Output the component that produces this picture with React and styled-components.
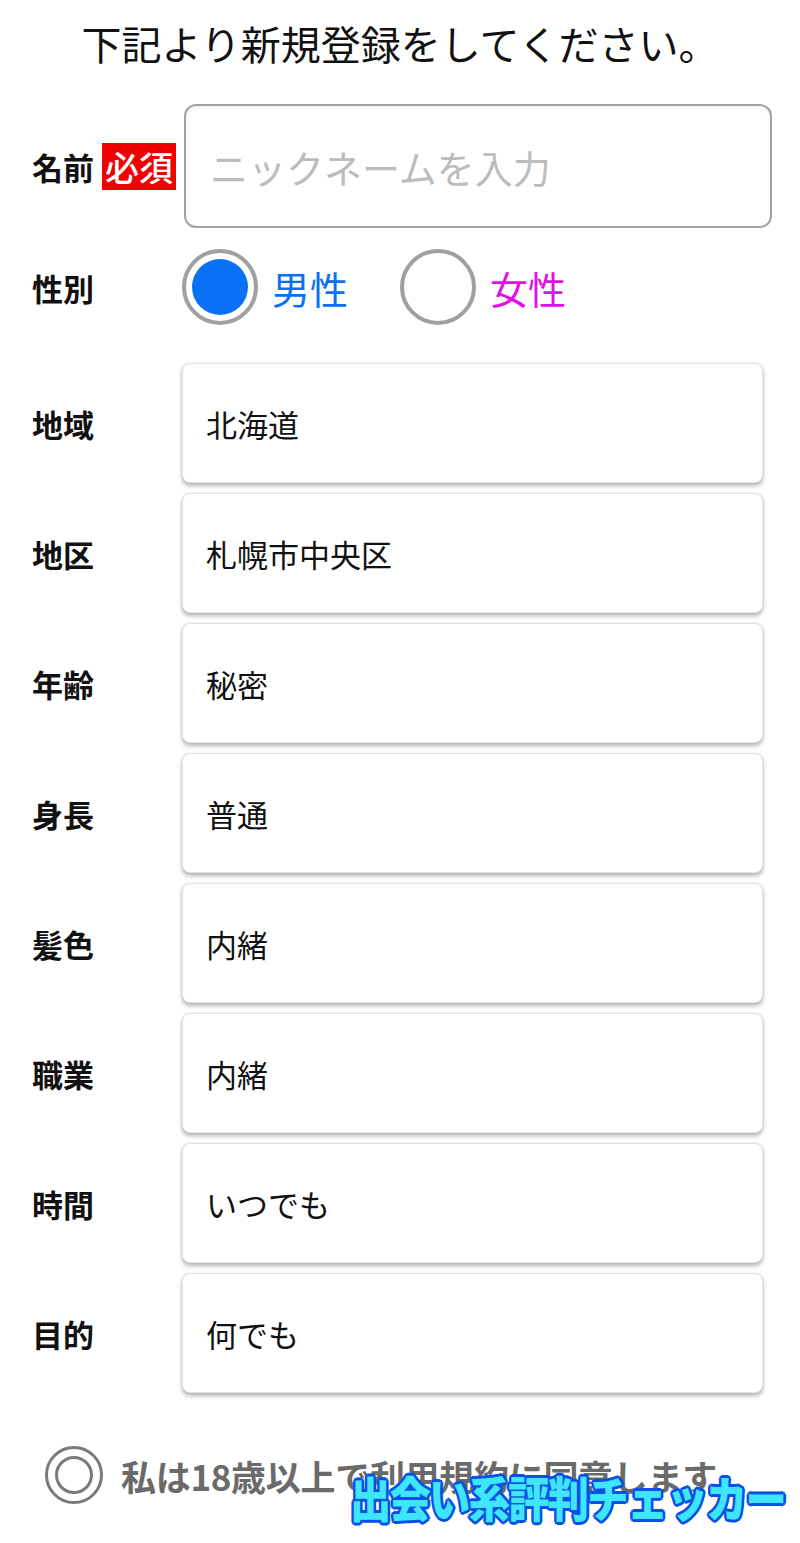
import React from 'react';
import styled, { createGlobalStyle } from 'styled-components';

const GlobalStyle = createGlobalStyle`
  html, body {
    margin: 0;
    padding: 0;
    background: #ffffff;
  }
  body {
    font-family: "Noto Sans CJK JP", "Noto Sans", sans-serif;
    color: #111;
  }
`;

const Page = styled.div`
  position: relative;
  width: 800px;
  min-height: 1543px;
  box-sizing: border-box;
  padding: 17px 28px 0 32px;
`;

const Heading = styled.h1`
  margin: 0 0 35px;
  text-align: center;
  font-size: 40px;
  font-weight: 400;
  line-height: 52px;
  padding-right: 4px;
`;

const Row = styled.div`
  display: grid;
  grid-template-columns: ${props => props.labelWidth || 150}px 1fr;
  align-items: center;
  margin-top: ${props => props.gapTop || 0}px;
`;

const Label = styled.div`
  display: flex;
  align-items: center;
  gap: 8px;
  font-size: 31px;
  font-weight: 700;
  color: #111;
`;

const Required = styled.span`
  background: #f00000;
  color: #fff;
  font-size: 34px;
  font-weight: 500;
  line-height: 47px;
  padding: 0 3px;
`;

const TextInput = styled.div`
  height: 124px;
  box-sizing: border-box;
  border: 2px solid #a3a3a3;
  border-radius: 12px;
  box-shadow: inset 0 1px 3px rgba(0, 0, 0, 0.08);
  display: flex;
  align-items: center;
  padding-left: 24px;
  font-size: 38px;
  color: #bcbcbc;
`;

const RadioGroup = styled.div`
  display: flex;
  align-items: center;
`;

const RadioCircle = styled.span`
  width: 76px;
  height: 76px;
  box-sizing: border-box;
  border: 4px solid #a0a0a0;
  border-radius: 50%;
  display: flex;
  align-items: center;
  justify-content: center;
  background: #fff;

  &::after {
    content: '';
    width: 56px;
    height: 56px;
    border-radius: 50%;
    background: ${props => (props.checked ? '#0a70f6' : 'transparent')};
  }
`;

const RadioText = styled.span`
  font-size: 38px;
  color: ${props => props.color};
  margin-left: 14px;
  margin-right: ${props => props.spacing || 0}px;
`;

const SelectList = styled.div`
  display: flex;
  flex-direction: column;
  gap: 10px;
  margin-top: 38px;
`;

const SelectBox = styled.div`
  width: 581px;
  height: 120px;
  box-sizing: border-box;
  border: 1px solid #e4e4e4;
  border-radius: 8px;
  background: #fff;
  box-shadow: 0 3px 4px rgba(0, 0, 0, 0.28), 0 0 2px rgba(0, 0, 0, 0.12);
  display: flex;
  align-items: center;
  padding-left: 23px;
  font-size: 31px;
  color: #111;
`;

const Agreement = styled.div`
  display: flex;
  align-items: center;
  margin-top: 53px;
  margin-left: 13px;
  gap: 18px;
`;

const DoubleCircle = styled.span`
  width: 58px;
  height: 58px;
  box-sizing: border-box;
  border: 3px solid #7a7a7a;
  border-radius: 50%;
  display: flex;
  align-items: center;
  justify-content: center;

  &::after {
    content: '';
    width: 38px;
    height: 38px;
    box-sizing: border-box;
    border: 3px solid #7a7a7a;
    border-radius: 50%;
  }
`;

const AgreementText = styled.span`
  font-size: 35px;
  font-weight: 700;
  color: #6a6a6a;
  letter-spacing: -0.3px;
`;

const Watermark = styled.div`
  position: absolute;
  left: 350px;
  top: 1462px;
  font-size: 48px;
  font-weight: 900;
  color: #3fe6fb;
  letter-spacing: -2px;
  line-height: 68px;
  white-space: nowrap;
  transform: scaleX(0.86);
  transform-origin: left center;
  text-shadow:
    2px 0 0 #0a4fe6, -2px 0 0 #0a4fe6, 0 2px 0 #0a4fe6, 0 -2px 0 #0a4fe6,
    2px 2px 0 #0a4fe6, -2px -2px 0 #0a4fe6, 2px -2px 0 #0a4fe6, -2px 2px 0 #0a4fe6,
    3px 0 0 #0a4fe6, -3px 0 0 #0a4fe6, 0 3px 0 #0a4fe6, 0 -3px 0 #0a4fe6;
`;

const fields = [
  { label: '地域', value: '北海道' },
  { label: '地区', value: '札幌市中央区' },
  { label: '年齢', value: '秘密' },
  { label: '身長', value: '普通' },
  { label: '髪色', value: '内緒' },
  { label: '職業', value: '内緒' },
  { label: '時間', value: 'いつでも' },
  { label: '目的', value: '何でも' },
];

const App = () => (
  <Page>
    <GlobalStyle />
    <Heading>下記より新規登録をしてください。</Heading>

    <Row labelWidth={152}>
      <Label>
        名前
        <Required>必須</Required>
      </Label>
      <TextInput>ニックネームを入力</TextInput>
    </Row>

    <Row gapTop={21}>
      <Label>性別</Label>
      <RadioGroup>
        <RadioCircle checked />
        <RadioText color="#0a70f6" spacing={52}>男性</RadioText>
        <RadioCircle />
        <RadioText color="#e010e6">女性</RadioText>
      </RadioGroup>
    </Row>

    <SelectList>
      {fields.map(f => (
        <Row key={f.label}>
          <Label>{f.label}</Label>
          <SelectBox>{f.value}</SelectBox>
        </Row>
      ))}
    </SelectList>

    <Agreement>
      <DoubleCircle />
      <AgreementText>私は18歳以上で利用規約に同意します</AgreementText>
    </Agreement>

    <Watermark>出会い系評判チェッカー</Watermark>
  </Page>
);

export default App;
